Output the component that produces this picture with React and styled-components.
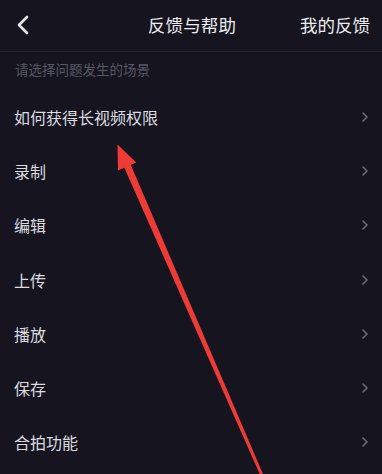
import React from "react";
import styled, { createGlobalStyle } from "styled-components";

const Global = createGlobalStyle`
  html, body { margin: 0; padding: 0; background: #16151f; }
  body { font-family: "Noto Sans CJK SC", "Noto Sans", sans-serif; }
`;

const Page = styled.div`
  position: relative;
  width: 382px;
  height: 474px;
  overflow: hidden;
  background: #16151f;
`;

const Header = styled.header`
  display: grid;
  grid-template-columns: 1fr auto 1fr;
  align-items: center;
  height: 49px;
  padding: 0 12px 2px 14px;
  border-bottom: 1px solid #282733;
`;

const BackButton = styled.div`
  display: flex;
  align-items: center;
  justify-self: start;
`;

const Title = styled.div`
  font-size: 17.5px;
  color: #ececef;
  letter-spacing: 0.2px;
`;

const HeaderAction = styled.div`
  justify-self: end;
  font-size: 17.5px;
  color: #ececef;
`;

const Hint = styled.div`
  font-size: 13.5px;
  color: #585764;
  padding: 8px 15px 0;
  height: 30px;
  line-height: 18px;
`;

const List = styled.div`
  display: flex;
  flex-direction: column;
`;

const Row = styled.div`
  display: flex;
  align-items: center;
  justify-content: space-between;
  height: 54.2px;
  padding: 0 13px 0 14px;
`;

const Label = styled.span`
  font-size: 16px;
  color: #dcdce0;
`;

const Overlay = styled.svg`
  position: absolute;
  left: 0;
  top: 0;
  pointer-events: none;
`;

const Chevron = () => (
  <svg width="8" height="12" viewBox="0 0 8 12">
    <path d="M2 2 L6 6 L2 10" fill="none" stroke="#6c6b77" strokeWidth="1.6" strokeLinecap="round" strokeLinejoin="round" />
  </svg>
);

const items = ["如何获得长视频权限", "录制", "编辑", "上传", "播放", "保存", "合拍功能"];

export default function App() {
  return (
    <Page>
      <Global />
      <Header>
        <BackButton>
          <svg width="18" height="22" viewBox="0 0 18 22">
            <path d="M13 3 L5 11 L13 19" fill="none" stroke="#e6e6ea" strokeWidth="2.6" strokeLinecap="round" strokeLinejoin="round" />
          </svg>
        </BackButton>
        <Title>反馈与帮助</Title>
        <HeaderAction>我的反馈</HeaderAction>
      </Header>
      <Hint>请选择问题发生的场景</Hint>
      <List>
        {items.map((t) => (
          <Row key={t}>
            <Label>{t}</Label>
            <Chevron />
          </Row>
        ))}
      </List>
      <Overlay width="382" height="474" viewBox="0 0 382 474">
        <polygon points="130.2,163.6 123.8,166.4 260.6,476 263.4,475" fill="#ee3b36" />
        <polygon points="117.5,144.5 136.3,162.5 118,170.5" fill="#ee3b36" />
      </Overlay>
    </Page>
  );
}
